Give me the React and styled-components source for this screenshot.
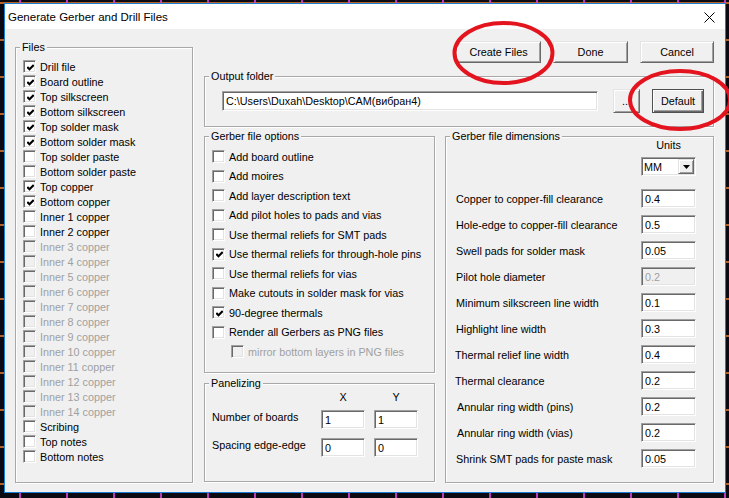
import React from 'react';
import styled, { createGlobalStyle, css } from 'styled-components';

const Global = createGlobalStyle`
  html, body { margin: 0; padding: 0; }
  body {
    width: 729px;
    height: 498px;
    overflow: hidden;
    background-color: #0b0a12;
    background-image:
      repeating-linear-gradient(90deg, transparent 0 19px, rgba(214, 70, 214, 0.85) 19px 21px, transparent 21px 47px),
      repeating-linear-gradient(0deg, transparent 0 13px, rgba(226, 118, 40, 0.8) 13px 15px, transparent 15px 37px);
    font-family: "Liberation Sans", Arial, sans-serif;
  }
`;

const UI_FONT = `"Liberation Sans", Arial, sans-serif`;

const Stage = styled.div`
  position: relative;
  width: 729px;
  height: 498px;
  box-sizing: border-box;
  padding: 3px 0 0 4px;
`;

const Window = styled.div`
  width: 722px;
  height: 490px;
  box-sizing: border-box;
  border: 1px solid #1a7dd6;
  background: #f0f0f0;
  display: flex;
  flex-direction: column;
`;

const TitleBar = styled.div`
  height: 25px;
  flex: none;
  background: #ffffff;
  display: flex;
  align-items: center;
  justify-content: space-between;
  padding: 0 10px 0 3px;
`;

const TitleText = styled.span`
  font: 11.5px ${UI_FONT};
  color: #000;
`;

const CloseIcon = () => (
  <svg width="11" height="11" viewBox="0 0 11 11" style={{ display: 'block', marginTop: '1px' }}>
    <path d="M0.5 0.5 L10.5 10.5 M10.5 0.5 L0.5 10.5" stroke="#000" strokeWidth="1" fill="none" />
  </svg>
);

const Content = styled.div`
  flex: 1;
  display: grid;
  grid-template-columns: 178px 510px;
  column-gap: 11px;
  align-items: start;
  padding: 12px 0 0 10px;
  font: 10.8px ${UI_FONT};
  color: #000;
`;

const GroupBox = styled.div`
  box-sizing: border-box;
  height: ${(p) => p.$h}px;
  margin-top: ${(p) => p.$mt || 0}px;
  border: 1px solid #a8a8a8;
  box-shadow: inset 1px 1px 0 #ffffff, 1px 1px 0 #ffffff;
`;

const GroupLegend = styled.div`
  display: table;
  margin: -7px 0 0 4px;
  padding: 0 2px;
  line-height: 13px;
  background: #f0f0f0;
  white-space: nowrap;
`;

const CheckList = styled.div`
  padding: ${(p) => p.$pt}px 0 0 7px;
`;

const CheckRow = styled.div`
  display: flex;
  align-items: center;
  height: ${(p) => p.$h}px;
  padding-left: ${(p) => p.$indent || 0}px;
  color: ${(p) => (p.$disabled ? '#a0a0a0' : '#000')};
  white-space: nowrap;
`;

const CheckBox = styled.span`
  flex: none;
  width: 13px;
  height: 13px;
  box-sizing: border-box;
  margin-right: 4px;
  border: 1px solid;
  border-color: #a0a0a0 #ffffff #ffffff #a0a0a0;
  box-shadow: inset 1px 1px 0 #696969, inset -1px -1px 0 #e3e3e3;
  background: ${(p) => (p.$disabled ? '#f0f0f0' : '#ffffff')};
  display: flex;
  align-items: center;
  justify-content: center;
`;

const Tick = () => (
  <svg width="7" height="7" viewBox="0 0 7 7" style={{ display: 'block', marginLeft: '1px', marginTop: '1px' }}>
    <polyline points="0.3,3 2.5,5.2 6.7,1" stroke="#000" strokeWidth="2.1" fill="none" />
  </svg>
);

const Check = ({ label, checked, disabled, h, indent }) => (
  <CheckRow $h={h} $disabled={disabled} $indent={indent}>
    <CheckBox $disabled={disabled}>{checked ? <Tick /> : null}</CheckBox>
    <span>{label}</span>
  </CheckRow>
);

const RightColumn = styled.div`
  display: flex;
  flex-direction: column;
`;

const ButtonBar = styled.div`
  display: flex;
  justify-content: flex-end;
  gap: 12px;
  height: 22px;
`;

const PushButton = styled.div`
  box-sizing: border-box;
  width: ${(p) => p.$w}px;
  height: ${(p) => p.$h || 22}px;
  flex: none;
  display: flex;
  align-items: center;
  justify-content: center;
  background: #f0f0f0;
  color: #000;
  border: 1px solid;
  border-color: #e3e3e3 #696969 #696969 #e3e3e3;
  box-shadow: inset 1px 1px 0 #ffffff, inset -1px -1px 0 #a0a0a0;
  ${(p) =>
    p.$default &&
    css`
      border-color: #505050;
      box-shadow: inset 1px 1px 0 #ffffff, inset -1px -1px 0 #696969, inset -2px -2px 0 #a0a0a0;
    `}
`;

const FolderRow = styled.div`
  display: flex;
  align-items: center;
  height: 24px;
  padding: 6px 0 0 17px;
`;

const TextField = styled.div`
  box-sizing: border-box;
  width: ${(p) => p.$w}px;
  height: ${(p) => p.$h || 19}px;
  flex: none;
  display: flex;
  align-items: center;
  padding-left: 3px;
  white-space: nowrap;
  overflow: hidden;
  border: 1px solid;
  border-color: #a0a0a0 #ffffff #ffffff #a0a0a0;
  box-shadow: inset 1px 1px 0 #696969, inset -1px -1px 0 #e3e3e3;
  background: ${(p) => (p.$disabled ? '#f0f0f0' : '#ffffff')};
  color: ${(p) => (p.$disabled ? '#a0a0a0' : '#000')};
`;

const Spacer = styled.div`
  width: ${(p) => p.$w}px;
  flex: none;
`;

const LowerArea = styled.div`
  display: grid;
  grid-template-columns: 231px 269px;
  column-gap: 10px;
  margin-top: 9px;
  align-items: start;
`;

const OptionsColumn = styled.div`
  display: flex;
  flex-direction: column;
`;

const PanelGrid = styled.div`
  display: grid;
  grid-template-columns: 100px 44px 44px;
  grid-template-rows: 14px 25px 28px;
  column-gap: 9px;
  align-items: end;
  padding-left: 7px;
`;

const PanelHead = styled.div`
  grid-column: ${(p) => p.$col};
  text-align: center;
  line-height: 14px;
  align-self: center;
`;

const PanelLabel = styled.div`
  grid-column: 1;
  line-height: 13px;
  padding-bottom: 5px;
  white-space: nowrap;
`;

const DimStack = styled.div`
  display: flex;
  flex-direction: column;
  padding: 0 17px 0 10px;
`;

const UnitsBlock = styled.div`
  align-self: flex-end;
  width: 55px;
  display: flex;
  flex-direction: column;
  align-items: center;
  margin-top: -4px;
`;

const UnitsLabel = styled.div`
  line-height: 13px;
`;

const Combo = styled.div`
  box-sizing: border-box;
  width: 55px;
  height: 19px;
  margin-top: 5px;
  display: flex;
  align-items: stretch;
  border: 1px solid;
  border-color: #a0a0a0 #ffffff #ffffff #a0a0a0;
  box-shadow: inset 1px 1px 0 #696969, inset -1px -1px 0 #e3e3e3;
  background: #ffffff;
  padding: 1px;
`;

const ComboText = styled.div`
  flex: 1;
  display: flex;
  align-items: center;
  padding-left: 1px;
`;

const ComboArrow = styled.div`
  box-sizing: border-box;
  width: 16px;
  flex: none;
  display: flex;
  align-items: center;
  justify-content: center;
  background: #f0f0f0;
  border: 1px solid;
  border-color: #e3e3e3 #696969 #696969 #e3e3e3;
  box-shadow: inset 1px 1px 0 #ffffff, inset -1px -1px 0 #a0a0a0;
`;

const DimRow = styled.div`
  display: flex;
  align-items: center;
  justify-content: space-between;
  height: 19px;
  margin-top: ${(p) => p.$mt}px;
`;

const DimLabel = styled.span`
  white-space: nowrap;
  margin-left: ${(p) => p.$dx || 0}px;
`;

const Overlay = styled.svg`
  position: absolute;
  left: 0;
  top: 0;
  width: 729px;
  height: 498px;
  pointer-events: none;
`;

const files = [
  ['Drill file', true],
  ['Board outline', true],
  ['Top silkscreen', true],
  ['Bottom silkscreen', true],
  ['Top solder mask', true],
  ['Bottom solder mask', true],
  ['Top solder paste', false],
  ['Bottom solder paste', false],
  ['Top copper', true],
  ['Bottom copper', true],
  ['Inner 1 copper', false],
  ['Inner 2 copper', false],
  ...Array.from({ length: 12 }, (_, i) => [`Inner ${i + 3} copper`, false, true]),
  ['Scribing', false],
  ['Top notes', false],
  ['Bottom notes', false],
];

const options = [
  ['Add board outline', false],
  ['Add moires', false],
  ['Add layer description text', false],
  ['Add pilot holes to pads and vias', false],
  ['Use thermal reliefs for SMT pads', false],
  ['Use thermal reliefs for through-hole pins', true],
  ['Use thermal reliefs for vias', false],
  ['Make cutouts in solder mask for vias', false],
  ['90-degree thermals', true],
  ['Render all Gerbers as PNG files', false],
];

const dims = [
  ['Copper to copper-fill clearance', '0.4'],
  ['Hole-edge to copper-fill clearance', '0.5'],
  ['Swell pads for solder mask', '0.05'],
  ['Pilot hole diameter', '0.2', true],
  ['Minimum silkscreen line width', '0.1'],
  ['Highlight line width', '0.3'],
  ['Thermal relief line width', '0.4', false, -1],
  ['Thermal clearance', '0.2', false, -1],
  ['Annular ring width (pins)', '0.2', false, 1],
  ['Annular ring width (vias)', '0.2', false, 1],
  ['Shrink SMT pads for paste mask', '0.05'],
];

export default function App() {
  return (
    <Stage>
      <Global />
      <Window>
        <TitleBar>
          <TitleText>Generate Gerber and Drill Files</TitleText>
          <CloseIcon />
        </TitleBar>
        <Content>
          <GroupBox $h={436} $mt={6}>
            <GroupLegend>Files</GroupLegend>
            <CheckList $pt={5}>
              {files.map(([label, checked, disabled]) => (
                <Check key={label} label={label} checked={checked} disabled={disabled} h={15} />
              ))}
            </CheckList>
          </GroupBox>

          <RightColumn>
            <ButtonBar>
              <PushButton $w={85}>Create Files</PushButton>
              <PushButton $w={75}>Done</PushButton>
              <PushButton $w={74}>Cancel</PushButton>
            </ButtonBar>

            <GroupBox $h={51} $mt={13}>
              <GroupLegend>Output folder</GroupLegend>
              <FolderRow>
                <TextField $w={376} $h={20}>C:\Users\Duxah\Desktop\CAM(вибран4)</TextField>
                <Spacer $w={15} />
                <PushButton $w={27} $h={24}>...</PushButton>
                <Spacer $w={12} />
                <PushButton $w={52} $h={24} $default>Default</PushButton>
              </FolderRow>
            </GroupBox>

            <LowerArea>
              <OptionsColumn>
                <GroupBox $h={237}>
                  <GroupLegend>Gerber file options</GroupLegend>
                  <CheckList $pt={4}>
                    {options.map(([label, checked]) => (
                      <Check key={label} label={label} checked={checked} h={19.5} />
                    ))}
                    <Check label="mirror bottom layers in PNG files" disabled h={19.5} indent={19} />
                  </CheckList>
                </GroupBox>
                <GroupBox $h={99} $mt={10}>
                  <GroupLegend>Panelizing</GroupLegend>
                  <PanelGrid>
                    <PanelHead $col={2}>X</PanelHead>
                    <PanelHead $col={3}>Y</PanelHead>
                    <PanelLabel>Number of boards</PanelLabel>
                    <TextField $w={44}>1</TextField>
                    <TextField $w={44}>1</TextField>
                    <PanelLabel>Spacing edge-edge</PanelLabel>
                    <TextField $w={44}>0</TextField>
                    <TextField $w={44}>0</TextField>
                  </PanelGrid>
                </GroupBox>
              </OptionsColumn>

              <GroupBox $h={347}>
                <GroupLegend>Gerber file dimensions</GroupLegend>
                <DimStack>
                  <UnitsBlock>
                    <UnitsLabel>Units</UnitsLabel>
                    <Combo>
                      <ComboText>MM</ComboText>
                      <ComboArrow>
                        <svg width="7" height="4" viewBox="0 0 7 4" style={{ display: 'block' }}>
                          <polygon points="0,0 7,0 3.5,4" fill="#000" />
                        </svg>
                      </ComboArrow>
                    </Combo>
                  </UnitsBlock>
                  {dims.map(([label, value, disabled, dx], i) => (
                    <DimRow key={label} $mt={i === 0 ? 13 : 7}>
                      <DimLabel $dx={dx}>{label}</DimLabel>
                      <TextField $w={55} $disabled={disabled}>{value}</TextField>
                    </DimRow>
                  ))}
                </DimStack>
              </GroupBox>
            </LowerArea>
          </RightColumn>
        </Content>
      </Window>
      <Overlay viewBox="0 0 729 498">
        <ellipse cx="503.5" cy="53" rx="49" ry="30" fill="none" stroke="#e4141e" strokeWidth="4" />
        <ellipse cx="680" cy="100" rx="50" ry="29" fill="none" stroke="#e4141e" strokeWidth="4" />
      </Overlay>
    </Stage>
  );
}
